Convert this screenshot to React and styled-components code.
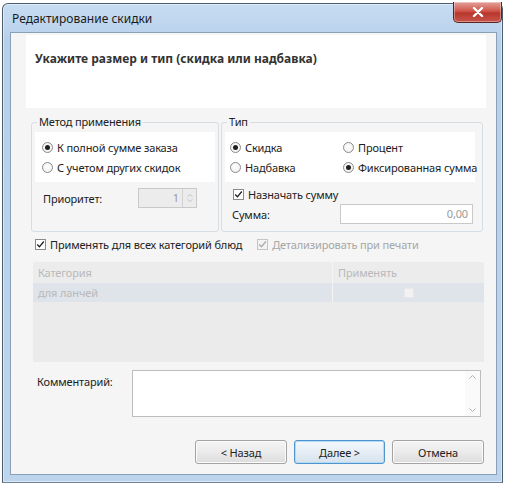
import React from 'react';
import styled, { createGlobalStyle } from 'styled-components';

const GlobalStyle = createGlobalStyle`
  html, body {
    margin: 0;
    padding: 0;
    background: #ffffff;
  }
  * {
    box-sizing: border-box;
  }
  body {
    font-family: "Noto Sans", "Open Sans", sans-serif;
    font-size: 11px;
    letter-spacing: -0.15px;
    color: #222;
  }
`;

const Window = styled.div`
  margin: 3px 0 0 2px;
  width: 501px;
  border: 1px solid #4d5d70;
  border-bottom-color: #6f8196;
  border-radius: 6px 6px 0 0;
  background: linear-gradient(180deg, #c6dcf2 0%, #b7d0ea 8%, #bcd4ec 100%);
  padding: 0 5px 7px 7px;
  box-shadow: inset 0 0 0 1px rgba(255, 255, 255, 0.45);
`;

const TitleBar = styled.div`
  height: 28px;
  display: flex;
  align-items: flex-start;
  justify-content: space-between;
`;

const Title = styled.div`
  font-size: 12px;
  letter-spacing: 0;
  color: #1b1b1b;
  margin: 6px 0 0 2px;
`;

const CloseButton = styled.div`
  width: 49px;
  height: 21px;
  margin: -2px -5px 0 0;
  border: 1px solid #5a2420;
  border-top: none;
  border-radius: 0 0 5px 5px;
  background: linear-gradient(180deg, #e3a39b 0%, #d0564b 45%, #b8372c 55%, #c7554a 100%);
  box-shadow: inset 0 0 0 1px rgba(255, 255, 255, 0.35);
  display: flex;
  align-items: center;
  justify-content: center;
`;

const Client = styled.div`
  border: 1px solid #8aa0b8;
  background: #f5f5f5;
  padding: 2px 10px 10px 15px;
`;

const Header = styled.div`
  height: 73px;
  background: #ffffff;
  padding: 15px 0 0 9px;
  font-size: 12px;
  letter-spacing: 0;
  font-weight: 700;
  color: #333;
`;

const Body = styled.div`
  padding: 0 2px 0 5px;
`;

const GroupsRow = styled.div`
  display: flex;
  gap: 2px;
  margin-top: 6px;
`;

const Group = styled.fieldset`
  margin: 0;
  min-width: 0;
  width: ${(p) => p.$width}px;
  border: 1px solid #d6dde3;
  border-radius: 3px;
  padding: 0 ${(p) => p.$right || 3}px 7px 3px;
  display: flex;
  flex-direction: column;
`;

const Legend = styled.legend`
  padding: 0 2px;
  margin-left: ${(p) => p.$indent}px;
  line-height: 16px;
  color: #222;
`;

const WhiteArea = styled.div`
  margin-top: 2px;
  background: #ffffff;
  padding: 5px 0 5px ${(p) => p.$pad}px;
  display: grid;
  grid-template-columns: ${(p) => p.$cols};
  grid-auto-rows: 20px;
`;

const Option = styled.div`
  display: flex;
  align-items: center;
  gap: 4px;
  color: ${(p) => (p.$disabled ? '#a6a6a6' : '#222')};
  white-space: nowrap;
`;

const RadioCircle = styled.span`
  width: 11px;
  height: 11px;
  border-radius: 50%;
  border: 1px solid #8a8a8a;
  background: radial-gradient(circle at 50% 40%, #ffffff 0%, #ececec 100%);
  display: flex;
  align-items: center;
  justify-content: center;
  flex-shrink: 0;

  &::after {
    content: '';
    width: 5px;
    height: 5px;
    border-radius: 50%;
    background: ${(p) => (p.$checked ? '#1f1f1f' : 'transparent')};
  }
`;

const CheckBox = styled.span`
  width: 11px;
  height: 11px;
  border: 1px solid ${(p) => (p.$disabled ? '#c4c4c4' : '#8a8a8a')};
  background: ${(p) => (p.$disabled ? '#f3f3f3' : '#fff')};
  display: flex;
  align-items: center;
  justify-content: center;
  flex-shrink: 0;
`;

const FieldRow = styled.div`
  display: flex;
  align-items: center;
  height: 20px;
  margin-top: ${(p) => p.$top || 0}px;
  padding-left: ${(p) => p.$pad}px;
`;

const FieldLabel = styled.span`
  width: ${(p) => p.$width}px;
  flex-shrink: 0;
  color: #222;
`;

const SpinBox = styled.div`
  width: 59px;
  height: 20px;
  border: 1px solid #c9c9c9;
  background: #ececec;
  display: flex;
`;

const SpinValue = styled.div`
  flex: 1;
  text-align: right;
  padding-right: 3px;
  line-height: 18px;
  color: #9a9a9a;
`;

const SpinArrows = styled.div`
  width: 14px;
  border-left: 1px solid #d2d2d2;
  display: flex;
  flex-direction: column;
  align-items: center;
  justify-content: center;
  gap: 2px;
`;

const TextInput = styled.div`
  width: 133px;
  height: 20px;
  border: 1px solid #c9c9c9;
  background: #ffffff;
  text-align: right;
  padding-right: 4px;
  line-height: 18px;
  color: #9a9a9a;
`;

const CheckRow = styled.div`
  display: flex;
  align-items: center;
  height: 18px;
  margin-top: 3px;
  padding-left: 4px;
`;

const CheckSpacer = styled.div`
  width: 15px;
`;

const Grid = styled.div`
  margin-top: 9px;
  height: 100px;
  margin-left: 2px;
  background: #ebebeb;
`;

const GridRow = styled.div`
  display: grid;
  grid-template-columns: 300px 1fr;
  height: ${(p) => p.$h}px;
  background: ${(p) => p.$bg};
  color: #b9b9b9;
`;

const GridCell = styled.div`
  display: flex;
  align-items: center;
  justify-content: ${(p) => (p.$center ? 'center' : 'flex-start')};
  padding-left: ${(p) => (p.$center ? 0 : 5)}px;
  border-right: ${(p) => (p.$divider ? '1px solid #f4f4f4' : 'none')};
`;

const GridCheck = styled.span`
  width: 10px;
  height: 10px;
  background: #f2f2f2;
  border: 1px solid #e8e8e8;
`;

const CommentRow = styled.div`
  display: flex;
  margin-top: 8px;
`;

const CommentLabel = styled.div`
  width: 101px;
  padding: 4px 0 0 6px;
`;

const TextArea = styled.div`
  width: 349px;
  height: 47px;
  border: 1px solid #bdbdbd;
  background: #ffffff;
  display: flex;
  justify-content: flex-end;
`;

const ScrollBar = styled.div`
  width: 15px;
  background: #fafafa;
  display: flex;
  flex-direction: column;
  justify-content: space-between;
  align-items: center;
  padding: 4px 0;
`;

const Buttons = styled.div`
  display: flex;
  justify-content: flex-end;
  gap: 7px;
  margin-top: 23px;
`;

const Button = styled.div`
  width: ${(p) => p.$width || 92}px;
  height: 24px;
  border: 1px solid ${(p) => (p.$default ? '#4f94cc' : '#a3a3a3')};
  border-radius: 3px;
  background: ${(p) =>
    p.$default
      ? 'linear-gradient(180deg, #f3f8fc 0%, #e6eef5 50%, #d6e2ec 100%)'
      : 'linear-gradient(180deg, #f4f4f4 0%, #ebebeb 50%, #dcdcdc 100%)'};
  box-shadow: inset 0 0 0 1px ${(p) => (p.$default ? '#b4dbf5' : '#fbfbfb')};
  display: flex;
  align-items: center;
  justify-content: center;
  color: #222;
`;

const Check = ({ disabled }) => (
  <CheckBox $disabled={disabled}>
    <svg width="11" height="11" viewBox="0 0 11 11">
      <path
        d="M1.5 5.5 L4.2 8.3 L9.5 1.8"
        fill="none"
        stroke={disabled ? '#a8a8a8' : '#1f1f1f'}
        strokeWidth="1.6"
      />
    </svg>
  </CheckBox>
);

const Radio = ({ checked, children }) => (
  <Option>
    <RadioCircle $checked={checked} />
    {children}
  </Option>
);

const Chevron = ({ up, color = '#b0b0b0', size = 7 }) => (
  <svg width={size} height={size - 3} viewBox="0 0 7 4">
    <path d={up ? 'M0.5 3.5 L3.5 0.5 L6.5 3.5' : 'M0.5 0.5 L3.5 3.5 L6.5 0.5'} fill="none" stroke={color} strokeWidth="1" />
  </svg>
);

export default function App() {
  return (
    <>
      <GlobalStyle />
      <Window>
        <TitleBar>
          <Title>Редактирование скидки</Title>
          <CloseButton>
            <svg width="12" height="10" viewBox="0 0 12 10">
              <path d="M2 1 L10 9 M10 1 L2 9" stroke="#ffffff" strokeWidth="2.4" strokeLinecap="round" />
            </svg>
          </CloseButton>
        </TitleBar>
        <Client>
          <Header>Укажите размер и тип (скидка или надбавка)</Header>
          <Body>
            <GroupsRow>
              <Group $width={188}>
                <Legend $indent={2}>Метод применения</Legend>
                <WhiteArea $pad={7} $cols="1fr">
                  <Radio checked>К полной сумме заказа</Radio>
                  <Radio>С учетом других скидок</Radio>
                </WhiteArea>
                <FieldRow $top={6} $pad={8}>
                  <FieldLabel $width={95}>Приоритет:</FieldLabel>
                  <SpinBox>
                    <SpinValue>1</SpinValue>
                    <SpinArrows>
                      <Chevron up size={6} />
                      <Chevron size={6} />
                    </SpinArrows>
                  </SpinBox>
                </FieldRow>
              </Group>
              <Group $width={262} $right={7}>
                <Legend $indent={2}>Тип</Legend>
                <WhiteArea $pad={5} $cols="113px 1fr">
                  <Radio checked>Скидка</Radio>
                  <Radio>Процент</Radio>
                  <Radio>Надбавка</Radio>
                  <Radio checked>Фиксированная сумма</Radio>
                </WhiteArea>
                <FieldRow $top={2} $pad={8}>
                  <Option>
                    <Check />
                    Назначать сумму
                  </Option>
                </FieldRow>
                <FieldRow $pad={7}>
                  <FieldLabel $width={108}>Сумма:</FieldLabel>
                  <TextInput>0,00</TextInput>
                </FieldRow>
              </Group>
            </GroupsRow>
            <CheckRow>
              <Option>
                <Check />
                Применять для всех категорий блюд
              </Option>
              <CheckSpacer />
              <Option $disabled>
                <Check disabled />
                Детализировать при печати
              </Option>
            </CheckRow>
            <Grid>
              <GridRow $h={21} $bg="#ececec">
                <GridCell $divider>Категория</GridCell>
                <GridCell>Применять</GridCell>
              </GridRow>
              <GridRow $h={19} $bg="#dfe3ea">
                <GridCell $divider>для ланчей</GridCell>
                <GridCell $center>
                  <GridCheck />
                </GridCell>
              </GridRow>
            </Grid>
            <CommentRow>
              <CommentLabel>Комментарий:</CommentLabel>
              <TextArea>
                <ScrollBar>
                  <Chevron up />
                  <Chevron />
                </ScrollBar>
              </TextArea>
            </CommentRow>
            <Buttons>
              <Button>&lt; Назад</Button>
              <Button $default $width={91}>Далее &gt;</Button>
              <Button>Отмена</Button>
            </Buttons>
          </Body>
        </Client>
      </Window>
    </>
  );
}
